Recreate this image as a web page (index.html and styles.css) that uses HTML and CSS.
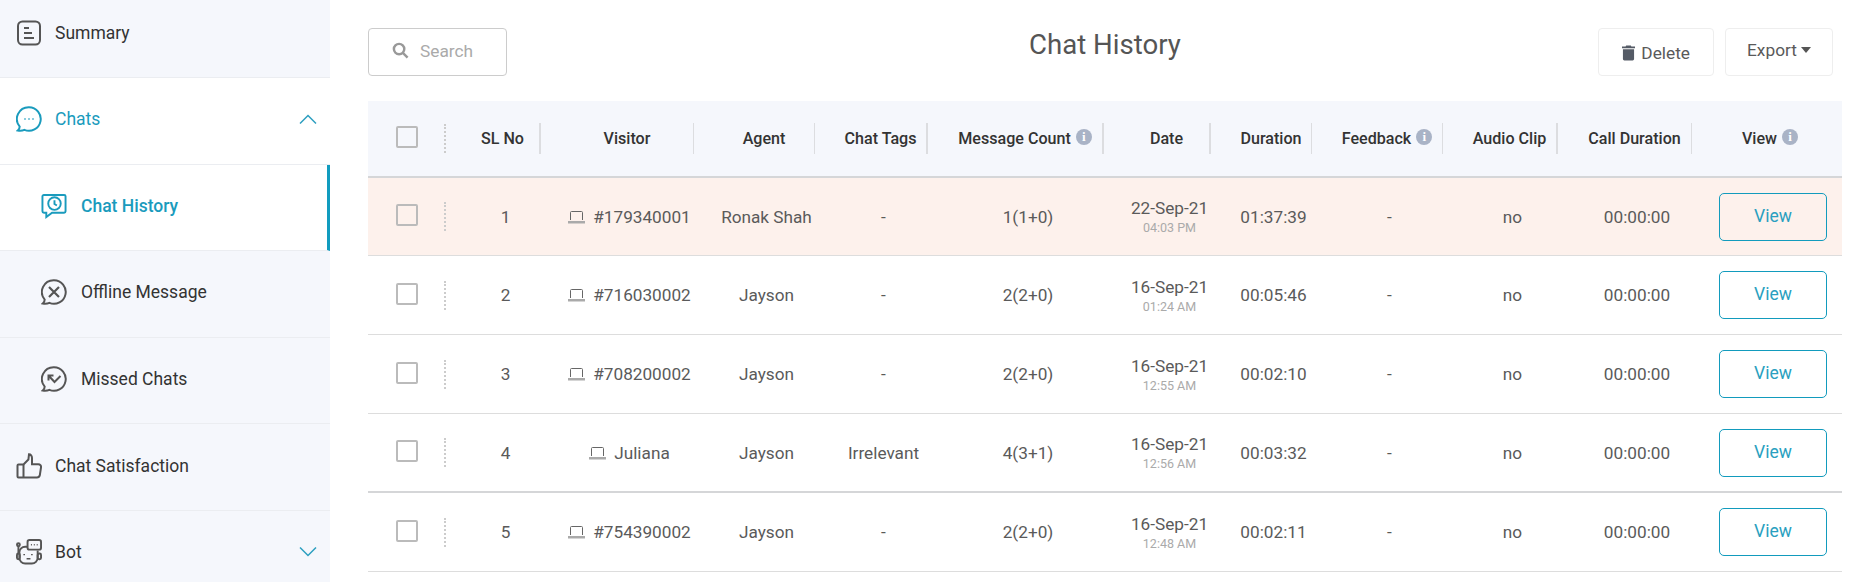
FILE: index.html
```html
<!DOCTYPE html>
<html lang="en">
<head>
    <meta charset="UTF-8">
    <title>Chat History</title>
    <link rel="stylesheet" href="styles.css">
</head>
<body>
    <nav class="sidebar">
        <a class="nav-item">
            <svg class="nav-icon" viewBox="0 0 26 26"><rect x="2" y="1.500" width="22" height="23" rx="4.500"/><path d="M8 8h5M8 13h8M8 18h10" stroke-width="2.200"/></svg>
            <span>Summary</span>
        </a>
        <a class="nav-item open">
            <svg class="nav-icon" viewBox="0 0 26 26"><path d="M13 1.200a11.800 11.800 0 1 1-4.600 22.700c-2 .9-4.400 1-6.600.7 1.300-1.100 1.900-2.300 1.900-4A11.800 11.800 0 0 1 13 1.200z"/><path d="M8.500 13h1M12.500 13h1M16.500 13h1" stroke-width="2"/></svg>
            <span>Chats</span>
            <svg class="chevron" viewBox="0 0 18 10"><path d="M1 9.500l8-8 8 8"/></svg>
        </a>
        <a class="nav-item sub active">
            <svg class="nav-icon" viewBox="0 0 27 26"><path d="M3 1.500h21a1.500 1.500 0 0 1 1.500 1.500v15.500a1.500 1.500 0 0 1-1.500 1.500H11.500L5.500 24.500V20H3a1.500 1.500 0 0 1-1.500-1.500V3A1.500 1.500 0 0 1 3 1.500z"/><circle cx="14" cy="10.500" r="6.500"/><path d="M14 7v4l2.500 1.500"/></svg>
            <span>Chat History</span>
        </a>
        <a class="nav-item sub">
            <svg class="nav-icon" viewBox="0 0 26 26"><path d="M13 1.200a11.800 11.800 0 1 1-4.600 22.700c-2 .9-4.400 1-6.600.7 1.300-1.100 1.900-2.300 1.900-4A11.800 11.800 0 0 1 13 1.200z"/><path d="M8 8l10 10M18 8L8 18" stroke-width="2.200"/></svg>
            <span>Offline Message</span>
        </a>
        <a class="nav-item sub">
            <svg class="nav-icon" viewBox="0 0 26 26"><path d="M13 1.200a11.800 11.800 0 1 1-4.600 22.700c-2 .9-4.400 1-6.600.7 1.300-1.100 1.900-2.300 1.900-4A11.800 11.800 0 0 1 13 1.200z"/><path d="M7.500 9.500l6 6.500 6-6M7.500 14.500v-5h5" stroke-width="2"/></svg>
            <span>Missed Chats</span>
        </a>
        <a class="nav-item">
            <svg class="nav-icon" viewBox="0 0 26 26"><path d="M7.500 11.500h-5a1 1 0 0 0-1 1v11a1 1 0 0 0 1 1h18.500c1.500 0 2.500-.9 2.800-2.200l1.200-7.800c.3-1.800-1-3.300-2.700-3.300h-6.300V5c0-2-1.300-3.700-3-3.700l-.6 5.200z"/><path d="M7.500 11.500v13"/></svg>
            <span>Chat Satisfaction</span>
        </a>
        <a class="nav-item">
            <svg class="nav-icon" viewBox="0 0 27 27"><circle cx="2.500" cy="6" r="1.500"/><path d="M2.500 7.500V15"/><path d="M12 8H9.500a6 6 0 0 0-6 6v5.500a6 6 0 0 0 6 6h7a6 6 0 0 0 6-6V12"/><rect x="1" y="15" width="3" height="6" rx="1.500"/><rect x="22.500" y="15" width="3.500" height="6" rx="1.500"/><rect x="12" y="1" width="14" height="10" rx="2"/><path d="M15.500 6h1M18.500 6h1M21.500 6h1M8.500 15.500v1.500M16.500 15.500v1.500M11 20.500h4" stroke-width="1.700"/></svg>
            <span>Bot</span>
            <svg class="chevron" viewBox="0 0 18 10"><path d="M1 .5l8 8 8-8"/></svg>
        </a>
    </nav>

    <main class="content">
        <div class="topbar">
            <div class="search">
                <svg class="search-icon" viewBox="0 0 18 18"><circle cx="7.500" cy="7.500" r="5.500"/><path d="M11.500 11.500l5 5"/></svg>
                <span>Search</span>
            </div>
            <h1 class="page-title">Chat History</h1>
            <div class="actions">
                <button class="btn btn-delete">
                    <svg class="trash" viewBox="0 0 14 16"><path d="M4.500 0h5l.6 1H14v2H0V1h3.900zM1 4h12v10.500a1.500 1.500 0 0 1-1.500 1.500h-9A1.500 1.500 0 0 1 1 14.500z"/></svg>
                    Delete
                </button>
                <button class="btn btn-export">Export<i class="caret"></i></button>
            </div>
        </div>

        <table class="history">
            <thead>
                <tr>
                    <th class="col-check"><div class="check-cell"><i class="box"></i></div></th>
                    <th class="col-sl"><div class="th-in thick">SL No</div></th>
                    <th class="col-visitor"><div class="th-in">Visitor</div></th>
                    <th class="col-agent"><div class="th-in">Agent</div></th>
                    <th class="col-tags"><div class="th-in thick">Chat Tags</div></th>
                    <th class="col-count"><div class="th-in thick">Message Count <i class="info">i</i></div></th>
                    <th class="col-date"><div class="th-in thick">Date</div></th>
                    <th class="col-dur"><div class="th-in">Duration</div></th>
                    <th class="col-feed"><div class="th-in">Feedback <i class="info">i</i></div></th>
                    <th class="col-audio"><div class="th-in thick">Audio Clip</div></th>
                    <th class="col-call"><div class="th-in">Call Duration</div></th>
                    <th class="col-view"><div class="th-in last">View <i class="info">i</i></div></th>
                </tr>
            </thead>
            <tbody>
                <tr class="unread">
                    <td><div class="check-cell"><i class="box"></i></div></td>
                    <td>1</td>
                    <td><svg class="laptop" viewBox="0 0 17 13"><path d="M2.500 9V1.500a1 1 0 0 1 1-1h10a1 1 0 0 1 1 1V9"/><path class="laptop-base" d="M0 10h17v2.500H0z"/></svg>#179340001</td>
                    <td>Ronak Shah</td>
                    <td>-</td>
                    <td>1(1+0)</td>
                    <td>22-Sep-21<small>04:03 PM</small></td>
                    <td>01:37:39</td>
                    <td>-</td>
                    <td>no</td>
                    <td>00:00:00</td>
                    <td class="view-cell"><button class="btn-view">View</button></td>
                </tr>
                <tr>
                    <td><div class="check-cell"><i class="box"></i></div></td>
                    <td>2</td>
                    <td><svg class="laptop" viewBox="0 0 17 13"><path d="M2.500 9V1.500a1 1 0 0 1 1-1h10a1 1 0 0 1 1 1V9"/><path class="laptop-base" d="M0 10h17v2.500H0z"/></svg>#716030002</td>
                    <td>Jayson</td>
                    <td>-</td>
                    <td>2(2+0)</td>
                    <td>16-Sep-21<small>01:24 AM</small></td>
                    <td>00:05:46</td>
                    <td>-</td>
                    <td>no</td>
                    <td>00:00:00</td>
                    <td class="view-cell"><button class="btn-view">View</button></td>
                </tr>
                <tr>
                    <td><div class="check-cell"><i class="box"></i></div></td>
                    <td>3</td>
                    <td><svg class="laptop" viewBox="0 0 17 13"><path d="M2.500 9V1.500a1 1 0 0 1 1-1h10a1 1 0 0 1 1 1V9"/><path class="laptop-base" d="M0 10h17v2.500H0z"/></svg>#708200002</td>
                    <td>Jayson</td>
                    <td>-</td>
                    <td>2(2+0)</td>
                    <td>16-Sep-21<small>12:55 AM</small></td>
                    <td>00:02:10</td>
                    <td>-</td>
                    <td>no</td>
                    <td>00:00:00</td>
                    <td class="view-cell"><button class="btn-view">View</button></td>
                </tr>
                <tr class="heavy">
                    <td><div class="check-cell"><i class="box"></i></div></td>
                    <td>4</td>
                    <td><svg class="laptop" viewBox="0 0 17 13"><path d="M2.500 9V1.500a1 1 0 0 1 1-1h10a1 1 0 0 1 1 1V9"/><path class="laptop-base" d="M0 10h17v2.500H0z"/></svg>Juliana</td>
                    <td>Jayson</td>
                    <td>Irrelevant</td>
                    <td>4(3+1)</td>
                    <td>16-Sep-21<small>12:56 AM</small></td>
                    <td>00:03:32</td>
                    <td>-</td>
                    <td>no</td>
                    <td>00:00:00</td>
                    <td class="view-cell"><button class="btn-view">View</button></td>
                </tr>
                <tr>
                    <td><div class="check-cell"><i class="box"></i></div></td>
                    <td>5</td>
                    <td><svg class="laptop" viewBox="0 0 17 13"><path d="M2.500 9V1.500a1 1 0 0 1 1-1h10a1 1 0 0 1 1 1V9"/><path class="laptop-base" d="M0 10h17v2.500H0z"/></svg>#754390002</td>
                    <td>Jayson</td>
                    <td>-</td>
                    <td>2(2+0)</td>
                    <td>16-Sep-21<small>12:48 AM</small></td>
                    <td>00:02:11</td>
                    <td>-</td>
                    <td>no</td>
                    <td>00:00:00</td>
                    <td class="view-cell"><button class="btn-view">View</button></td>
                </tr>
            </tbody>
        </table>
    </main>
</body>
</html>
```

FILE: styles.css
```css
* {
    margin: 0;
    padding: 0;
    box-sizing: border-box;
}

html, body {
    height: 100%;
    overflow: hidden;
}

body {
    display: flex;
    font-family: Roboto, sans-serif;
    color: #5a5a5a;
    background-color: #fff;
}

/* Sidebar */
.sidebar {
    flex: 0 0 330px;
    margin-top: -8.6px;
    background-color: #f5f7fc;
}

.nav-item {
    display: flex;
    align-items: center;
    height: 86.6px;
    padding: 0 13px 3px 16px;
    font-size: 17.5px;
    color: #333;
    border-bottom: 1px solid #ebedf1;
}

.nav-item.open,
.nav-item.active {
    background-color: #fff;
    color: #1a9bbd;
    font-weight: 500;
}

.nav-item.open {
    font-weight: 400;
}

.nav-item.sub {
    padding-left: 41px;
}

.nav-item.active {
    border-right: 3px solid #119cbf;
}

.nav-icon {
    flex: none;
    width: 26px;
    height: 26px;
    margin-right: 13px;
    fill: none;
    stroke: #555;
    stroke-width: 2;
}

.nav-item.sub .nav-icon {
    margin-right: 14px;
}

.nav-item.open .nav-icon,
.nav-item.active .nav-icon {
    stroke: #1a9bbd;
}

.chevron {
    width: 18px;
    height: 10px;
    margin-left: auto;
    fill: none;
    stroke: #2e9fc0;
    stroke-width: 1.5;
}

/* Main area */
.content {
    flex: 1;
    min-width: 0;
    padding: 28px 24px 0 38px;
}

.topbar {
    display: grid;
    grid-template-columns: 1fr auto 1fr;
    height: 48px;
    margin-bottom: 25px;
}

.search {
    display: flex;
    align-items: center;
    width: 139px;
    height: 48px;
    padding: 0 0 3px 23px;
    border: 1px solid #ccc;
    border-radius: 4px;
    font-size: 17.3px;
    color: #aaa;
}

.search-icon {
    width: 17px;
    height: 17px;
    margin-right: 11px;
    fill: none;
    stroke: #999;
    stroke-width: 2.6;
}

.page-title {
    margin-top: 1px;
    font-size: 27.6px;
    font-weight: 400;
    line-height: 32px;
    color: #555;
}

.actions {
    display: flex;
    justify-content: flex-end;
    gap: 11px;
    margin-right: 9px;
}

.btn {
    height: 48px;
    border: 1px solid #eee;
    border-radius: 4px;
    background: #fff;
    font-family: inherit;
    font-size: 17.3px;
    color: #5a5a5a;
}

.btn-delete {
    width: 116px;
    padding-top: 2px;
}

.btn-export {
    width: 108px;
    padding-bottom: 4px;
}

.trash {
    width: 13px;
    height: 16px;
    margin-right: 2px;
    vertical-align: -2px;
    fill: #555b66;
}

.caret {
    display: inline-block;
    margin-left: 4px;
    vertical-align: 3px;
    border-top: 6px solid #555;
    border-left: 5px solid transparent;
    border-right: 5px solid transparent;
}

/* Table */
.history {
    width: 1474px;
    table-layout: fixed;
    border-spacing: 0;
    font-size: 17.2px;
}

.col-check { width: 78px; }
.col-sl { width: 95px; }
.col-visitor { width: 153px; }
.col-agent { width: 121px; }
.col-tags { width: 113px; }
.col-count { width: 176px; }
.col-date { width: 107px; }
.col-dur { width: 101px; }
.col-feed { width: 131px; }
.col-audio { width: 115px; }
.col-call { width: 134px; }
.col-view { width: 150px; }

.history th {
    height: 77px;
    padding: 0;
    background-color: #f5f7fc;
    border-bottom: 2px solid #d5d6d8;
    font-size: 16.1px;
    font-weight: 500;
    color: #333;
}

.th-in {
    display: flex;
    align-items: center;
    justify-content: center;
    gap: 5px;
    height: 31px;
    padding-left: 20px;
    border-right: 1px solid #dcdde0;
    white-space: nowrap;
}

.th-in.thick {
    border-right-width: 2px;
}

.th-in.last {
    padding-left: 6px;
    border-right: 0;
}

.history td {
    height: 79px;
    padding: 0 0 0 24px;
    text-align: center;
    border-bottom: 1px solid #ddd;
    white-space: nowrap;
}

.history td:first-child {
    padding: 0;
}

.history .unread td {
    height: 78px;
    background-color: #fdf1ec;
}

.history .heavy td {
    border-bottom-width: 2px;
    border-bottom-color: #d5d6d8;
}

.history td.view-cell {
    padding-left: 27px;
    text-align: left;
}

.check-cell {
    display: flex;
    align-items: center;
    height: 29px;
    padding: 0 0 3px 28px;
    border-right: 2px dotted #ccc;
}

.box {
    width: 22px;
    height: 22px;
    border: 2px solid #bbb;
    border-radius: 2px;
}

.info {
    display: inline-block;
    width: 16px;
    height: 16px;
    margin-bottom: 4px;
    border-radius: 50%;
    background-color: #a9b3c6;
    font: bold 13px/16px "Liberation Serif", serif;
    color: #fff;
    text-align: center;
}

.laptop {
    width: 17px;
    height: 13px;
    margin-right: 8px;
    vertical-align: -1px;
    fill: none;
    stroke: #666;
    stroke-width: 1;
}

.laptop-base {
    fill: #aaa;
    stroke: none;
}

.history small {
    display: block;
    margin-top: 2px;
    font-size: 12.5px;
    color: #aaa;
}

.btn-view {
    display: block;
    width: 108px;
    height: 48px;
    padding-bottom: 2px;
    border: 1.5px solid #129bbd;
    border-radius: 5px;
    background: transparent;
    font-family: inherit;
    font-size: 17.5px;
    color: #2a9fc0;
}
```
